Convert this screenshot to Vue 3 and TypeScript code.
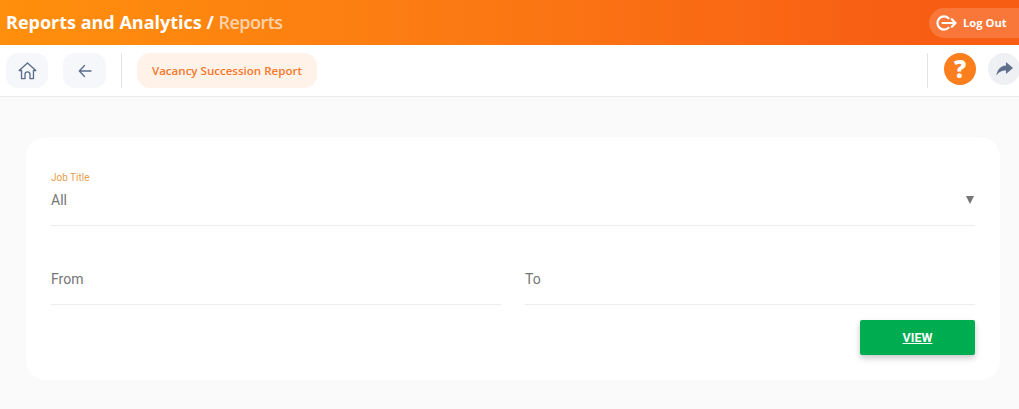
<script setup lang="ts">
const title = 'Reports and Analytics /'
const crumb = 'Reports'
const tab = 'Vacancy Succession Report'
</script>

<template>
  <div class="page">
    <header class="topbar">
      <h1 class="heading">{{ title }} <span class="crumb">{{ crumb }}</span></h1>
      <button class="logout" type="button">
        <svg width="21" height="18" viewBox="0 0 21 18" fill="none" stroke="#fff" stroke-width="2.2" stroke-linecap="round" stroke-linejoin="round">
          <path d="M12.6 4.2A6.6 6.6 0 1 0 12.6 13.8" />
          <path d="M6.5 9H19.5M15.8 5.2L19.5 9L15.8 12.8" />
        </svg>
        <span>Log Out</span>
      </button>
    </header>

    <nav class="toolbar">
      <button class="tool" type="button" aria-label="Home">
        <svg width="19" height="18" viewBox="0 0 20 19" fill="none" stroke="#5b6b8c" stroke-width="1.4" stroke-linejoin="round" stroke-linecap="round">
          <path d="M1.2 9L10 1L18.8 9H16.3V17.5H12.6V13A2.6 2.6 0 0 0 7.4 13V17.5H3.7V9Z" />
        </svg>
      </button>
      <button class="tool back" type="button" aria-label="Back">
        <svg width="14" height="14" viewBox="0 0 14 14" fill="none" stroke="#5b6b8c" stroke-width="1.3" stroke-linecap="round" stroke-linejoin="round">
          <path d="M13 7H1.3M6.5 1.5L1.3 7L6.5 12.5" />
        </svg>
      </button>
      <span class="divider first"></span>
      <div class="pill">{{ tab }}</div>
      <span class="divider last"></span>
      <button class="help" type="button" aria-label="Help">?</button>
      <button class="share" type="button" aria-label="Share">
        <svg width="17" height="14" viewBox="0 0 17 14" fill="#5f6f8e">
          <path d="M10 0L17 6L10 12V8.4C5.6 8.4 2.6 9.8 0.4 13.6C1 8.4 4 4 10 3.5Z" />
        </svg>
      </button>
    </nav>

    <main class="content">
      <form class="card" @submit.prevent>
        <div class="field select">
          <label class="float-label">Job Title</label>
          <div class="value-row">
            <span>All</span>
            <span class="caret"></span>
          </div>
        </div>

        <div class="dates">
          <div class="field date"><span>From</span></div>
          <div class="field date"><span>To</span></div>
        </div>

        <div class="actions">
          <button class="view" type="submit">VIEW</button>
        </div>
      </form>
    </main>
  </div>
</template>

<style>
html,
body {
  margin: 0;
  background: #fafafa;
}
</style>

<style scoped>
.page {
  width: 1019px;
  height: 409px;
  overflow: hidden;
  background: #fafafa;
  font-family: Roboto, "Liberation Sans", sans-serif;
}

button {
  padding: 0;
  border: 0;
  font-family: inherit;
}

.topbar {
  height: 45px;
  box-sizing: border-box;
  padding: 0 0 0 6px;
  display: flex;
  align-items: center;
  justify-content: space-between;
  background: linear-gradient(90deg, #ff8f0c 0%, #fb7a13 45%, #f85d14 90%, #f85d14 100%);
}

.heading {
  margin: 0 0 1px;
  font-family: "Open Sans", sans-serif;
  font-size: 18px;
  font-weight: 700;
  color: #fff;
}

.crumb {
  font-weight: 600;
  letter-spacing: -0.55px;
  color: #fcd3ad;
}

.logout {
  width: 90px;
  height: 30px;
  border-radius: 15px 0 0 15px;
  display: flex;
  align-items: center;
  gap: 6px;
  padding-left: 7px;
  box-sizing: border-box;
  background: rgba(255, 255, 255, 0.16);
  color: #fff;
  font-family: "Open Sans", sans-serif;
  font-size: 11.2px;
  font-weight: 700;
}

.toolbar {
  height: 52px;
  box-sizing: border-box;
  padding: 8px 0 8px 6px;
  display: flex;
  align-items: flex-start;
  background: #fff;
  border-bottom: 1px solid #ececec;
}

.tool {
  width: 42px;
  height: 35px;
  border-radius: 12px;
  display: flex;
  align-items: center;
  justify-content: center;
  background: #f5f7fa;
}

.back {
  width: 43px;
  margin-left: 15px;
}

.divider {
  width: 1px;
  height: 35px;
  background: #e4e4e4;
}

.divider.first {
  margin: 0 15px;
}

.divider.last {
  margin-left: auto;
}

.pill {
  width: 180px;
  height: 35px;
  border-radius: 13px;
  display: flex;
  align-items: center;
  justify-content: center;
  background: #fef2e9;
  color: #f9782a;
  font-family: "Open Sans", sans-serif;
  font-size: 11.55px;
  font-weight: 600;
}

.help {
  width: 32px;
  height: 32px;
  margin-left: 16px;
  border-radius: 50%;
  background: #fd7e1c;
  color: #fff;
  font-family: "Open Sans", sans-serif;
  font-size: 24px;
  font-weight: 800;
  line-height: 32px;
}

.share {
  width: 32px;
  height: 32px;
  margin-left: 12px;
  margin-right: -1px;
  flex: none;
  border-radius: 50%;
  display: flex;
  align-items: center;
  justify-content: center;
  background: #eef0f4;
}

.content {
  padding: 40px 19px 0 26px;
}

.card {
  height: 243px;
  box-sizing: border-box;
  padding: 35px 25px 0;
  border-radius: 20px;
  background: #fff;
}

.field {
  border-bottom: 1px solid #ececec;
  box-sizing: border-box;
  color: #757575;
  font-size: 14px;
}

.select {
  height: 54px;
}

.float-label {
  display: block;
  font-size: 10px;
  line-height: 12px;
  color: #e8a04c;
}

.value-row {
  margin-top: 6px;
  display: flex;
  align-items: center;
  justify-content: space-between;
  line-height: 20px;
}

.caret {
  width: 0;
  height: 0;
  margin-right: 1px;
  border-left: 4px solid transparent;
  border-right: 4px solid transparent;
  border-top: 8px solid #757575;
}

.dates {
  margin-top: 24px;
  display: grid;
  grid-template-columns: 450px 450px;
  gap: 24px;
}

.date {
  height: 55px;
  padding-top: 19px;
  line-height: 20px;
}

.actions {
  margin-top: 15px;
  display: flex;
  justify-content: flex-end;
}

.view {
  width: 115px;
  height: 35px;
  border-radius: 2px;
  background: #00ac50;
  color: #fff;
  font-size: 12.5px;
  font-weight: 700;
  text-decoration: underline;
  box-shadow: 0 3px 6px rgba(0, 0, 0, 0.22);
}
</style>
